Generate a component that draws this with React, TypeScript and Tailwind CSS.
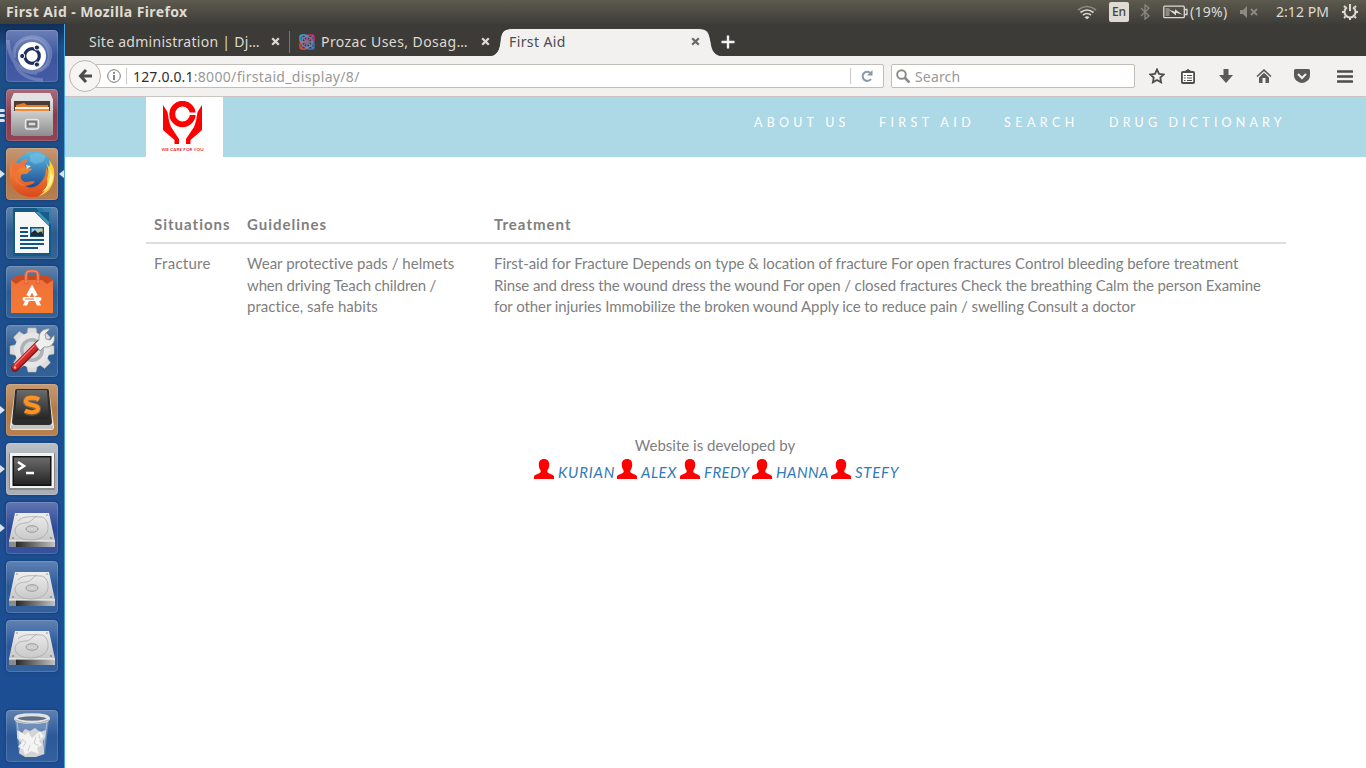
import React from "react";

type Kids = { children?: React.ReactNode };

function Svg({ s = 52, children }: Kids & { s?: number }) {
  return (
    <svg width={s} height={s} viewBox={`0 0 ${s} ${s}`} className="block shrink-0">
      {children}
    </svg>
  );
}

/* ---------- launcher artwork ---------- */

const Dash = () => (
  <Svg>
    <g fill="none" stroke="#fff" strokeWidth="3.500" opacity=".2">
      <path d="M8 28C6 12 20 4 33 9c10 5 13 17 8 27" />
      <path d="M24 7c16-1 24 13 19 24-4 10-16 13-24 9" />
      <path d="M2 10c1 22 13 33 29 33" />
      <path d="M9 32c2 11 14 18 28 18" />
    </g>
    <path d="M8 28C6 12 20 4 33 9c10 5 13 17 8 27l-6 5-20-3z" fill="#fff" opacity=".1" />
    <circle cx="26" cy="26" r="14" fill="#fff" />
    <circle cx="26" cy="26" r="7.300" fill="none" stroke="#1c2e62" strokeWidth="3.200" />
    <g fill="#1c2e62" stroke="#fff" strokeWidth="1">
      <circle cx="16.200" cy="26" r="2.600" />
      <circle cx="30.900" cy="17.500" r="2.600" />
      <circle cx="30.900" cy="34.500" r="2.600" />
    </g>
  </Svg>
);

const Files = () => (
  <Svg>
    <path d="M8 4h36l3 7v35H5V11z" fill="url(#metal)" />
    <path d="M5 11h42L44 4H8z" fill="#e2e2e2" />
    <path d="M8 12h36v11H8z" fill="#4b3b35" />
    <path d="M10 16l8-2 3 2h21v4H10z" fill="#e57a2a" />
    <path d="M9 18h34v2H9z" fill="#fff4e4" />
    <path d="M9 20h34v3H9z" fill="#ee8b3b" />
    <path d="M7 22h38v25H7z" fill="url(#metal2)" />
    <rect x="19.500" y="30.500" width="13" height="9.500" rx="2" fill="#999" stroke="#e8e8e8" strokeWidth="1.500" />
    <rect x="22" y="33" width="8" height="4" fill="#ddd" stroke="#555" />
  </Svg>
);

const Firefox = () => (
  <Svg>
    <circle cx="28" cy="23" r="19.500" fill="url(#globe)" />
    <path d="M24 7c5-3 12-2 16 1l-3 6-8 2-5-3z" fill="#7cc8e8" opacity=".5" />
    <path
      d="M8 9c-4 7-5 16-4 23 2 10 11 17 22 17 12 0 21-8 22-19 1-8-1-14-5-18 2 6 2 10 0 14l-3-7c0 8-2 12-6 16-4 5-12 6-17 2 5 1 9 0 12-3-3-2-6 0-9 0-4 0-6-4-5-7 2-2 5 0 7-2 1-2 4-3 4-4-2-1-6 0-7-2-1-3 1-6 3-8-4 0-7 2-8 5-2-1-4-1-6 0-1-2-1-4 0-7z"
      fill="url(#fox)"
    />
    <path d="M43 12c4 5 6 10 5 18-1 9-7 16-15 18 7-5 9-10 8-17 2-5 2-12-2-19l4 7c1-2 1-4 0-7z" fill="#f9d33c" />
    <path d="M44 21c1 8-1 17-8 23 9-4 12-12 11-19l-1 4c0-3-1-6-2-8z" fill="#fff3a0" />
    <path d="M8 9c-1 3-1 5 0 7 2-1 4-1 6 0 1-3 4-5 8-5-2 2-4 5-3 8-4 0-8 3-8 7 0 7 5 11 12 12-8 1-17-4-17-14C5 18 5 13 8 9z" fill="#f0713a" />
    <path d="M20 17l5 1-4 3z" fill="#fff" opacity=".8" />
  </Svg>
);

const Writer = () => (
  <Svg>
    <path d="M8 1h28l9 11v35q0 2-2 2H9q-2 0-2-2V3q0-2 1-2z" fill="#145a83" />
    <path d="M30 1l15 17V1z" fill="#2f7eae" opacity=".75" />
    <path d="M9 5h20l14 14v27H9z" fill="#f7f7f7" />
    <path d="M29 5l14 14V5z" fill="#195e88" />
    <path d="M29 5l4 3 10 11V15L33 5z" fill="#4595bf" />
    <g fill="#115680">
      <path d="M14 20h8v2h-8zM14 24h8v2h-8zM14 28h8v2h-8zM14 32h24v2H14zM14 36h24v2H14zM14 40h18v2H14z" />
      <path d="M24 20h14v10H24z" />
    </g>
    <path d="M25.500 21.500h11v7h-11z" fill="#a8d3ed" />
    <path d="M25 29v-3l4-3 3 3 3-2 2 3v2z" fill="#202c33" />
    <circle cx="35" cy="23" r="1.500" fill="#f4ce30" />
  </Svg>
);

const Software = () => (
  <Svg>
    <path d="M5 14h42v33H5z" fill="url(#orange)" />
    <path d="M5 14l5-4h32l5 4-6 4-5-4H16l-6 4z" fill="#c84a20" />
    <path d="M20 18V9q0-4 4-4h4q4 0 4 4v9" fill="none" stroke="#e4623a" strokeWidth="3.200" />
    <path d="M20 17V9q0-4 4-4h4q4 0 4 4v8" fill="none" stroke="#f29c77" strokeWidth="1" />
    <path d="M22 30l4-7.500 4 7.500" fill="none" stroke="#fff" strokeWidth="3.800" />
    <path d="M17 39.500l2-4.500h4l-2 4.500zM35 39.500L33 35h-4l2 4.500z" fill="#fff" />
    <rect x="16.500" y="31" width="19" height="4" rx="2" fill="#fff" />
    <path d="M19 32.500h9v1h-9z" fill="#e86d29" />
  </Svg>
);

const Settings = () => (
  <Svg>
    <g fill="#dcdcdc" stroke="#b6b6b6" strokeWidth=".6">
      {[0, 45, 90, 135].map((a) => (
        <path key={a} d="M22 3h8l2 11v24l-2 9h-8l-2-9V14z" transform={`rotate(${a} 26 25)`} />
      ))}
    </g>
    <circle cx="26" cy="25" r="17.500" fill="#e6e6e6" />
    <circle cx="26" cy="25" r="12" fill="#aeb2b5" />
    <circle cx="26" cy="25" r="8.500" fill="#d8dadd" />
    <path d="M9 43L33 19" stroke="#8f1212" strokeWidth="7.500" strokeLinecap="round" />
    <path d="M9 42L31 20" stroke="#cf2a2a" strokeWidth="6" strokeLinecap="round" />
    <path d="M9 40L28 21" stroke="#ef7777" strokeWidth="1.300" strokeLinecap="round" />
    <path d="M29 19l4-4c-1-7 4-12 11-11l-5 5 1 5 4 1 4-5c2 8-3 13-10 12l-4 4z" fill="#eee" stroke="#888" strokeWidth=".8" />
    <circle cx="9" cy="42.500" r="1.200" fill="#f7b5b5" />
  </Svg>
);

const Sublime = () => (
  <Svg>
    <path d="M9 6h34l5 37q0 3-3 3H7q-3 0-3-3z" fill="#e9e9e9" />
    <path d="M5 41h42v4H5z" fill="#c6c6c6" />
    <path d="M11 5h30q2 0 2 2l3 31q0 3-3 3H9q-3 0-3-3L9 7q0-2 2-2z" fill="#2d2d2d" />
    <path d="M11 6h30l2 29H9z" fill="url(#dark)" />
    <path d="M33 16c-3-2-12-3-13 1-1 6 12 3 12 8 0 4-8 5-13 2" fill="none" stroke="#ffb35c" strokeWidth="6" opacity=".3" />
    <path d="M33 15.500c-3-2-12-3-13 1-1 6 12 3 12 8 0 4-8 5-13 2" fill="none" stroke="#ff931f" strokeWidth="4" />
  </Svg>
);

const Terminal = () => (
  <Svg>
    <rect x="3" y="10" width="46" height="37" rx="1" fill="#888" />
    <rect x="4" y="10" width="44" height="35" fill="#f2f2f2" />
    <rect x="6.500" y="13" width="39" height="30" fill="#111" />
    <rect x="8" y="14.500" width="36" height="27" fill="url(#dark)" />
    <path d="M12 19l6 4-6 4M20 30h8" fill="none" stroke="#fff" strokeWidth="2.500" />
  </Svg>
);

const Drive = () => (
  <Svg>
    <path d="M9 11h34l6 28H3z" fill="url(#disk)" />
    <path d="M3 39h46v6H3z" fill="url(#side)" />
    <path d="M3 39h7v6H3z" fill="#8b8b8b" />
    <path d="M3 39h46" stroke="#fff" />
    <path d="M12 19c5-6 17-4 23-4 4 0 7 5 7 9 1 9-7 14-17 14S9 34 9 28c1-6 7-7 12-7 4-1 6-5 10-7" fill="none" stroke="#aaa" strokeWidth=".8" />
    <ellipse cx="26" cy="27" rx="6" ry="3.300" fill="#d1d1d1" stroke="#999" />
    <ellipse cx="26" cy="27" rx="2" ry="1" fill="#eee" stroke="#aaa" strokeWidth=".5" />
    <g fill="#8a8a8a">
      <circle cx="11" cy="13" r=".8" />
      <circle cx="41" cy="13" r=".8" />
      <circle cx="7" cy="36" r="1" />
      <circle cx="45" cy="36" r="1" />
    </g>
  </Svg>
);

const Trash = () => (
  <Svg>
    <path d="M9 9l4 35q13 6 26 0l4-35z" fill="#c9d7e7" opacity=".35" />
    <path d="M11 20l5 3 3-4 5 2 5-3 5 4 6-2-1 8-2 3 1 13-8 3H19l-6-4 2-10-4-5z" fill="#d4d4d4" />
    <path d="M13 21l6 4 3-3 4 6 8-7 4 5-5 5 3 4-5 3 2 6-8-3-6 4-2-6-5-2 5-6-4-3z" fill="#f3f3f3" />
    <path d="M16 29l4 3-3 5M30 27l-2 6 5 3M24 35l-2 6M33 24l1 5" fill="none" stroke="#cfcfcf" />
    <path d="M11 11l4 33M41 11l-4 33" stroke="#dce7f2" opacity=".5" />
    <ellipse cx="26" cy="8.500" rx="16.500" ry="3.800" fill="#5d7088" stroke="#e3e3e3" strokeWidth="3" />
    <path d="M9 10q17 7 34 0" fill="none" stroke="#aaa" />
  </Svg>
);

function Defs() {
  const grads: [string, string, string][] = [
    ["metal", "#eeeeee", "#979797"],
    ["metal2", "#cfcfcf", "#8d8d8d"],
    ["globe", "#5db9df", "#17428c"],
    ["fox", "#f6a13a", "#dc471d"],
    ["orange", "#f0713b", "#f47a31"],
    ["dark", "#6b6b6b", "#252525"],
    ["disk", "#eeeeee", "#c7c7c7"],
  ];
  return (
    <svg width="0" height="0" className="absolute">
      <defs>
        {grads.map(([id, a, b]) => (
          <linearGradient key={id} id={id} x1="0" y1="0" x2="0" y2="1">
            <stop offset="0" stopColor={a} />
            <stop offset="1" stopColor={b} />
          </linearGradient>
        ))}
        <linearGradient id="side">
          <stop offset="0.1" stopColor="#1e1e1e" />
          <stop offset="1" stopColor="#c4c4c4" />
        </linearGradient>
      </defs>
    </svg>
  );
}

const apps = [
  { bg: "bg-[#3c55a0]", icon: <Dash />, pips: 0 },
  { bg: "bg-[#8c3b4f]", icon: <Files />, pips: 3 },
  { bg: "bg-[#b27748]", icon: <Firefox />, pips: 1, active: true },
  { bg: "bg-[#2a5b91]", icon: <Writer />, pips: 0 },
  { bg: "bg-[#2b5b92]", icon: <Software />, pips: 0 },
  { bg: "bg-[#295a93]", icon: <Settings />, pips: 0 },
  { bg: "bg-[#b37b45]", icon: <Sublime />, pips: 1 },
  { bg: "bg-[#a5abb4]", icon: <Terminal />, pips: 1 },
  { bg: "bg-[#2d4998]", icon: <Drive />, pips: 1 },
  { bg: "bg-[#2a5899]", icon: <Drive />, pips: 0 },
  { bg: "bg-[#2a5899]", icon: <Drive />, pips: 0 },
];

function Tile({ bg, children }: Kids & { bg: string }) {
  return (
    <div className={`h-[52px] w-[52px] shrink-0 overflow-hidden rounded-[4px] shadow-[0_0_3px_rgba(0,10,40,0.35)] ${bg}`}>
      <div className="h-full w-full rounded-[4px] bg-linear-to-b from-white/25 via-transparent to-white/5 inset-ring inset-ring-white/15">
        {children}
      </div>
    </div>
  );
}

function Launcher() {
  return (
    <aside className="flex w-[65px] shrink-0 flex-col border-r border-[#4aa5e8] bg-linear-to-b from-[#102f5a] via-[#1c4e88] via-[3%] to-[#1d4e95] pt-[6px] pb-[6px]">
      <div className="flex flex-col gap-[7px]">
        {apps.map((a, i) => (
          <div key={i} className="flex h-[52px] items-center">
            <div className="flex w-[6px] shrink-0 flex-col gap-[2px]">
              {a.pips === 1 && (
                <svg width="6" height="8"><path d="M0 0l5 4-5 4z" fill="#dce3eb" /></svg>
              )}
              {a.pips === 3 && [0, 1, 2].map((n) => <div key={n} className="h-[3px] w-[5px] rounded-r bg-[#dce3eb]" />)}
            </div>
            <Tile bg={a.bg}>{a.icon}</Tile>
            {a.active && <svg width="6" height="8" className="shrink-0"><path d="M6 0L1 4l5 4z" fill="#dce3eb" /></svg>}
          </div>
        ))}
      </div>
      <div className="mt-auto pl-[6px]">
        <Tile bg="bg-[#2a5899]"><Trash /></Tile>
      </div>
    </aside>
  );
}

/* ---------- top panel ---------- */

function TopPanel() {
  return (
    <header className="flex h-6 shrink-0 items-center bg-linear-to-b from-[#5d5a4f] to-[#3e3d38] pl-[6px] font-['Noto_Sans',sans-serif] text-[#dfdbd2]">
      <div className="w-[1070px] shrink-0 text-[14px] leading-6 font-bold tracking-[0.4px]">First Aid - Mozilla Firefox</div>
      <div className="flex w-[33px] shrink-0">
        <svg width="22" height="18" viewBox="0 0 22 18" fill="none" strokeWidth="1.700">
          <path d="M2 7q9-7 18 0" stroke="#8c8a80" />
          <path d="M4.500 9.500q6.500-5 13 0M7 12q4-3 8 0" stroke="#dfdbd2" />
          <path d="M8.500 14.300q2.500-2 5 0L11 16.300z" fill="#dfdbd2" stroke="none" />
        </svg>
      </div>
      <div className="flex h-5 w-5 shrink-0 items-center justify-center rounded-[2px] bg-[#dfdbd2] text-[12px] font-medium text-[#45433d]">En</div>
      <div className="flex w-[34px] shrink-0 justify-center pr-[2px]">
        <svg width="12" height="16" viewBox="0 0 12 16" fill="none" stroke="#8c8a80" strokeWidth="1.300">
          <path d="M2 4l8 8-4 3V1l4 3-8 8" />
        </svg>
      </div>
      <svg width="25" height="14" viewBox="0 0 25 14" fill="none" stroke="#dfdbd2" strokeWidth="1.300" className="shrink-0">
        <rect x=".8" y="1.200" width="20.500" height="11.500" rx="1" />
        <path d="M22 4.500h2v5h-2" />
        <path d="M2.500 3h4v8h-4z" fill="#8c8a80" stroke="none" />
        <path d="M5.500 4.500l6.500 2.300V4.300l7.500 5.500-6.500-2V10.500z" fill="#dfdbd2" stroke="none" />
      </svg>
      <div className="w-[52px] shrink-0 pl-[2px] text-[14px] leading-6 tracking-[0.3px]">(19%)</div>
      <svg width="18" height="14" viewBox="0 0 18 14" className="shrink-0">
        <path d="M0 5h3l4-4v12L3 9H0z" fill="#8c8a80" />
        <path d="M11 4l6 6M17 4l-6 6" stroke="#8c8a80" strokeWidth="1.800" />
      </svg>
      <div className="w-[83px] shrink-0 pl-[18px] text-[14px] leading-6 tracking-[0.05px] whitespace-nowrap">2:12 PM</div>
      <svg width="18" height="18" viewBox="0 0 18 18" fill="none" stroke="#dfdbd2" className="shrink-0">
        <path d="M6 4.300a5.500 5.500 0 1 0 6 0" strokeWidth="2" />
        <path d="M9 1v7" strokeWidth="2" />
        <path d="M3 3l1.500 1.500M15 3l-1.500 1.500M1 9h2M17 9h-2M3 15l1.500-1.500M15 15l-1.500-1.500M9 17v-2" strokeWidth="2" />
      </svg>
    </header>
  );
}

/* ---------- browser chrome ---------- */

const Cross = ({ color }: { color: string }) => (
  <svg width="9" height="9" viewBox="0 0 9 9" className="shrink-0">
    <path d="M1.200 1.200l6.600 6.600M7.800 1.200L1.200 7.800" stroke={color} strokeWidth="2.300" />
  </svg>
);

function Tabs() {
  return (
    <div className="flex h-8 shrink-0 items-stretch bg-[#3c3b37] font-['Noto_Sans',sans-serif] text-[14px] text-[#dedad2]">
      <div className="flex w-[225px] shrink-0 items-center pt-[3px] pl-6">
        <span className="w-[182px] shrink-0 tracking-[0.27px] whitespace-nowrap">Site administration | Dj…</span>
        <Cross color="#dedad2" />
        <div className="ml-[9px] h-[22px] w-px bg-[#77756f]" />
      </div>
      <div className="flex w-[198px] shrink-0 items-center pt-[3px] pl-[9px]">
        <svg width="16" height="16" viewBox="0 0 16 16" fill="none" strokeWidth="1.400" className="mr-[6px] shrink-0">
          <rect x="1" y="1" width="7" height="7" rx="2" stroke="#3da6d5" />
          <rect x="8" y="1" width="7" height="7" rx="2" stroke="#d82b83" />
          <rect x="1" y="8" width="7" height="7" rx="2" stroke="#d95535" />
          <rect x="8" y="8" width="7" height="7" rx="2" stroke="#4774bb" />
          <path d="M3 5l5-3 5 3v6l-5 3-5-3z" stroke="#738db6" />
          <path d="M2 2l12 12" stroke="#5a86b4" />
          <path d="M14 2L2 14" stroke="#a65686" />
        </svg>
        <span className="w-[160px] shrink-0 tracking-[0.42px] whitespace-nowrap">Prozac Uses, Dosag…</span>
        <Cross color="#dedad2" />
      </div>
      <div className="relative flex w-[234px] shrink-0 items-center pt-[3px] pl-[21px] text-[#4c4c4c]">
        <svg width="236" height="28" viewBox="0 0 236 28" className="absolute bottom-0 left-0">
          <path d="M0 28C9 28 11 22 12 14C13 4 15 .5 25 .5H209C220 .5 221 4 223 14C224 23 227 28 236 28" fill="#f2f1f0" stroke="#292825" strokeWidth=".8" />
        </svg>
        <span className="relative w-[182px] shrink-0 tracking-[0.4px]">First Aid</span>
        <span className="relative flex"><Cross color="#6a6a68" /></span>
      </div>
      <div className="-ml-px flex items-center pt-[3px]">
        <svg width="14" height="14" viewBox="0 0 14 14"><path d="M7 .5v13M.5 7h13" stroke="#f2f1f0" strokeWidth="2.400" /></svg>
      </div>
    </div>
  );
}

const Cell = ({ w, children }: Kids & { w: string }) => (
  <div className={`flex shrink-0 items-center justify-center ${w}`}>{children}</div>
);

function Toolbar() {
  return (
    <div className="flex h-[41px] shrink-0 items-center border-b border-[#c9c5c1] bg-[#f2f1f0] pl-1 font-['Noto_Sans',sans-serif] text-[14px]">
      <div className="z-10 flex h-8 w-8 shrink-0 items-center justify-center rounded-full border border-[#bbb6b0] bg-[#f6f5f4]">
        <svg width="16" height="16" viewBox="0 0 16 16"><path d="M15 8H4M9 2L3.500 8 9 14" fill="none" stroke="#4c4c4c" strokeWidth="3" /></svg>
      </div>
      <div className="-ml-[6px] flex h-6 w-[789px] shrink-0 items-center rounded-[2px] border border-[#c1bdb8] bg-white pl-[11px]">
        <svg width="14" height="14" viewBox="0 0 14 14" className="shrink-0">
          <circle cx="7" cy="7" r="6.300" fill="none" stroke="#777" />
          <path d="M7 3v1.800M7 6v5" stroke="#666" strokeWidth="1.600" />
        </svg>
        <div className="mr-[6px] ml-[5px] h-4 w-px bg-[#c9c9c9]" />
        <div className="w-[717px] shrink-0 tracking-[0.33px] text-[#999]"><span className="tracking-[0.15px] text-[#2e2e2e]">127.0.0.1</span>:8000/firstaid_display/8/</div>
        <div className="h-4 w-px bg-[#c9c9c9]" />
        <Cell w="w-[31px]">
          <svg width="12" height="12" viewBox="0 0 12 12"><path d="M9.500 3A4.600 4.600 0 1 0 10 9" fill="none" stroke="#8b98a7" strokeWidth="2" /><path d="M11.500 0v5.500H6z" fill="#8b98a7" /></svg>
        </Cell>
      </div>
      <div className="ml-[7px] flex h-6 w-[244px] shrink-0 items-center rounded-[2px] border border-[#c1bdb8] bg-white pl-1 text-[#999]">
        <svg width="14" height="14" viewBox="0 0 14 14" fill="none" stroke="#8a8a8a"><circle cx="5.500" cy="5.500" r="4.300" strokeWidth="1.900" /><path d="M8.500 8.500l5 5" strokeWidth="2.600" /></svg>
        <span className="pl-[5px] tracking-[0.15px]">Search</span>
      </div>
      <Cell w="w-[37px] pl-[7px]">
        <svg width="16" height="16" viewBox="0 0 16 16"><path d="M8 1.500l2 4.300 4.700.6-3.400 3.200.8 4.700L8 12l-4.100 2.300.8-4.700L1.300 6.400 6 5.800z" fill="none" stroke="#4c4c4c" strokeWidth="1.800" /></svg>
      </Cell>
      <div className="h-[18px] w-px bg-[#d0cdca]" />
      <Cell w="w-[31px]">
        <svg width="14" height="15" viewBox="0 0 14 15" fill="none" stroke="#4c4c4c"><rect x=".9" y="3" width="12.200" height="11" rx="1" fill="#fff" strokeWidth="1.800" /><path d="M4 2.500l3-2 3 2z" fill="#4c4c4c" /><path d="M3 6.500h1.500M6 6.500h5M3 9h1.500M6 9h5M3 11.500h1.500M6 11.500h5" /></svg>
      </Cell>
      <Cell w="w-[45px]">
        <svg width="14" height="14" viewBox="0 0 14 14" fill="#5a5a5a"><path d="M4.500 0h5v6H14l-7 8-7-8h4.500z" /></svg>
      </Cell>
      <Cell w="w-[31px]">
        <svg width="16" height="15" viewBox="0 0 16 15"><path d="M1 7.500l7-6.300 7 6.300" fill="none" stroke="#5a5a5a" strokeWidth="1.600" /><path d="M3 8.500l5-4.700 5 4.700V14H9.500V9h-3v5H3z" fill="#5a5a5a" /></svg>
      </Cell>
      <Cell w="w-[45px]">
        <svg width="16" height="14" viewBox="0 0 16 14"><path d="M1.500 0h13Q16 0 16 1.500V6q0 4-3 6-5 4-10 0-3-2-3-6V1.500Q0 0 1.500 0z" fill="#5a5a5a" /><path d="M4 5l4 4 4-4" fill="none" stroke="#f2f1f0" strokeWidth="2" /></svg>
      </Cell>
      <div className="h-8 w-px bg-[#dad8d5]" />
      <Cell w="w-[42px]">
        <svg width="16" height="13" viewBox="0 0 16 13"><path d="M1 1.500h14M1 6.500h14M1 11.500h14" stroke="#4c4c4c" strokeWidth="2.600" strokeLinecap="round" /></svg>
      </Cell>
    </div>
  );
}

/* ---------- web page ---------- */

function SiteNav() {
  return (
    <nav className="flex h-[60px] shrink-0 bg-[#add8e6] pl-[81px] font-['Lato',sans-serif] text-[12.5px] leading-[17px] text-white">
      <div className="flex h-[60px] w-[77px] shrink-0 flex-col items-center bg-white pt-[4px] pr-[4px]">
        <svg width="40" height="44" viewBox="0 0 40 44">
          <circle cx="19.500" cy="13" r="10.300" fill="none" stroke="#f00" strokeWidth="5.800" />
          <path d="M24 11.500h9v2.500h-9z" fill="#fff" />
          <path d="M0 4l4.500 7 1.500 9 2 6 8 12v5h-4.500v-4L0 29zM39 4l-4.500 7-1.500 9-2 6-8 12v5h4.500v-4L39 29z" fill="#f00" />
        </svg>
        <span className="mt-[2px] text-[4.500px] leading-[6px] font-bold tracking-[0.1px] whitespace-nowrap text-[#e32b32]">WE CARE FOR YOU</span>
      </div>
      <div className="flex pt-[17px] pl-[531px] whitespace-nowrap">
        <span className="w-[125px] tracking-[4.200px]">ABOUT US</span>
        <span className="w-[125px] tracking-[4.400px]">FIRST AID</span>
        <span className="w-[105px] tracking-[4.450px]">SEARCH</span>
        <span className="tracking-[4.150px]">DRUG DICTIONARY</span>
      </div>
    </nav>
  );
}

const people = [
  { name: "KURIAN", w: "w-[83px]", track: "tracking-[0.8px]" },
  { name: "ALEX", w: "w-[63px]", track: "tracking-[0.5px]" },
  { name: "FREDY", w: "w-[72px]", track: "tracking-[0.45px]" },
  { name: "HANNA", w: "w-[79px]", track: "tracking-[0.4px]" },
  { name: "STEFY", w: "w-[69px]", track: "tracking-[0.7px]" },
];

export default function App() {
  return (
    <div className="flex h-[768px] w-[1366px] flex-col overflow-hidden bg-white">
      <Defs />
      <TopPanel />
      <div className="flex min-h-0 flex-1">
        <Launcher />
        <div className="flex w-[1301px] flex-col">
          <Tabs />
          <Toolbar />
          <SiteNav />
          <main className="pt-[48px] pl-[81px] font-['Lato',sans-serif] text-[15px] leading-[21.43px] text-[#808080]">
            <table className="w-[1140px] table-fixed border-collapse text-left">
              <thead>
                <tr className="border-b-2 border-[#ddd] tracking-[1px]">
                  <th className="w-[93px] px-2 pt-[9px] pb-[7px] font-bold">Situations</th>
                  <th className="w-[247px] px-2 pt-[9px] pb-[7px] font-bold">Guidelines</th>
                  <th className="px-2 pt-[9px] pb-[7px] font-bold">Treatment</th>
                </tr>
              </thead>
              <tbody>
                <tr className="align-top whitespace-nowrap [font-variant-ligatures:none]">
                  <td className="px-2 pt-[9px] pb-[7px] tracking-[0.25px]">Fracture</td>
                  <td className="px-2 pt-[9px] pb-[7px]">
                    <span className="tracking-[0.02px]">Wear protective pads / helmets</span><br />
                    <span className="tracking-[-0.15px]">when driving Teach children /</span><br />
                    <span className="tracking-[0.05px]">practice, safe habits</span>
                  </td>
                  <td className="px-2 pt-[9px] pb-[7px]">
                    <span className="tracking-[-0.04px]">First-aid for Fracture Depends on type &amp; location of fracture For open fractures Control bleeding before treatment</span><br />
                    <span className="tracking-[-0.1px]">Rinse and dress the wound dress the wound For open / closed fractures Check the breathing Calm the person Examine</span><br />
                    <span className="tracking-[-0.08px]">for other injuries Immobilize the broken wound Apply ice to reduce pain / swelling Consult a doctor</span>
                  </td>
                </tr>
              </tbody>
            </table>
          </main>
          <footer className="mt-[110px] font-['Lato',sans-serif] text-[15px] leading-[21px] text-[#808080]">
            <p className="w-[1300px] text-center">Website is developed by</p>
            <div className="flex pt-[3px] pl-[469px]">
              {people.map((p) => (
                <a key={p.name} className={`flex shrink-0 items-start text-[#337ab7] italic ${p.w} ${p.track}`}>
                  <svg width="20" height="20" viewBox="0 0 20 20" className="mr-1 shrink-0">
                    <path d="M10 0c3.400 0 5.200 2.200 5.200 5.300 0 2.800-.6 4.800-1.800 6v1.500c0 .7.500 1 1.300 1.400l4 1.800q1.300.7 1.300 1.600V20H0v-2.400q0-.9 1.300-1.600l4-1.800c.8-.4 1.300-.7 1.300-1.400v-1.500C5.400 10.100 4.800 8.100 4.800 5.300 4.800 2.200 6.600 0 10 0z" fill="#f00" />
                  </svg>
                  <span className="pt-[3px]">{p.name}</span>
                </a>
              ))}
            </div>
          </footer>
        </div>
      </div>
    </div>
  );
}
